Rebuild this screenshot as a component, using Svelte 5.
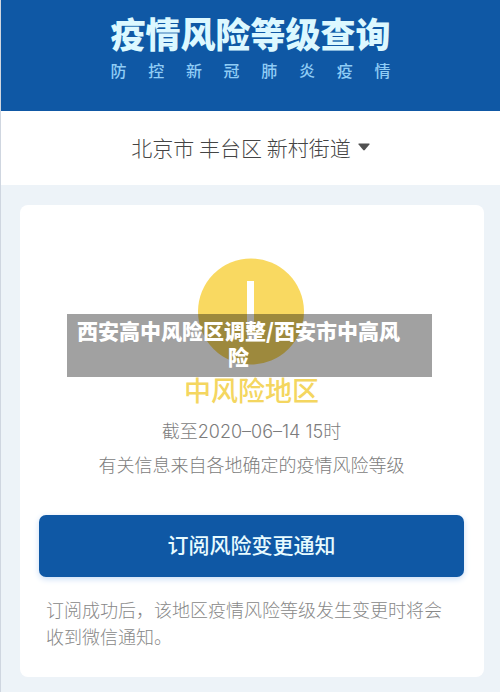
<script>
    let region = ["北京市", "丰台区", "新村街道"];
    let subtitle = "防控新冠肺炎疫情";
    let updated = "2020–06–14 15";
</script>

<style>
:global(body){
    margin: 0;
    background: #edf3f8;
}
.page{
    min-height: 100vh;
    box-sizing: border-box;
    font-family: "Noto Sans CJK SC", sans-serif;
    background: #edf3f8;
    border-left: 1px solid #cfd6e0;
}
.banner{
    display: flex;
    flex-direction: column;
    align-items: center;
    padding: 12px 0 29px;
    background: #0f58a5;
}
.banner-text{
    display: flex;
    flex-direction: column;
}
h1{
    margin: 0;
    font-size: 35px;
    line-height: 42px;
    font-weight: 900;
    color: #dcf8ff;
}
.subtitle{
    display: flex;
    justify-content: space-between;
    margin: 5px 0 0;
    font-size: 16px;
    line-height: 23px;
    font-weight: 500;
    color: #8fccf5;
}
.region{
    display: flex;
    align-items: center;
    justify-content: center;
    gap: 7px;
    width: 100%;
    height: 74px;
    padding: 0 0 2px;
    border: 0;
    background: #fff;
    font-family: inherit;
    font-size: 21px;
    font-weight: 300;
    color: #444;
}
.card{
    position: relative;
    margin: 20px 16px 16px 19px;
    padding: 53px 20px 27px 19px;
    border-radius: 8px;
    background: #fff;
    text-align: center;
}
.status-icon{
    display: block;
    width: 107px;
    height: 107px;
    margin: 0 auto;
}
h2{
    margin: 7px 0 0;
    font-size: 27px;
    line-height: 36px;
    font-weight: 500;
    color: #f4d660;
}
.info{
    margin: 6px 0 0;
    font-size: 18px;
    line-height: 32px;
    font-weight: 300;
    color: #7c7c7c;
}
.info p{
    margin: 0;
}
.latin{
    font-family: Inter, sans-serif;
}
.subscribe{
    display: block;
    width: 100%;
    height: 62px;
    margin: 35px 0 0;
    padding: 0 0 4px;
    border: 0;
    border-radius: 7px;
    background: #0f58a5;
    box-shadow: 0 2px 6px #c8dcf5;
    font-family: inherit;
    font-size: 21px;
    font-weight: 500;
    color: #e8fbff;
}
.note{
    margin: 19px 7px 0;
    font-size: 18px;
    line-height: 27px;
    font-weight: 300;
    text-align: left;
    color: #888;
}
.caption{
    position: absolute;
    top: 109px;
    left: 47px;
    right: 52px;
    padding: 3px 30px 8px 8px;
    background: rgba(0, 0, 0, 0.37);
    font-size: 21px;
    line-height: 26px;
    font-weight: 900;
    color: #fff;
}
</style>

<div class="page">
    <header class="banner">
        <div class="banner-text">
            <h1>疫情风险等级查询</h1>
            <p class="subtitle">
                {#each subtitle as char}
                    <span>{char}</span>
                {/each}
            </p>
        </div>
    </header>
    <button type="button" class="region">
        <span>{region.join(" ")}</span>
        <svg width="12" height="8" viewBox="0 0 12 8" aria-hidden="true">
            <path d="M1 0.5h10q1 0 0.4 0.9L6.8 7q-0.8 0.8-1.6 0L0.6 1.4Q0 0.5 1 0.5z" fill="#505050" />
        </svg>
    </button>
    <main class="card">
        <svg class="status-icon" viewBox="0 0 107 107" aria-hidden="true">
            <circle cx="53" cy="53.5" r="53" fill="#f9d961" />
            <rect x="49" y="23" width="7" height="46" fill="#fff" />
            <rect x="49" y="76" width="7" height="7" fill="#fff" />
        </svg>
        <h2>中风险地区</h2>
        <div class="info">
            <p>截至<span class="latin">{updated}</span>时</p>
            <p>有关信息来自各地确定的疫情风险等级</p>
        </div>
        <button type="button" class="subscribe">订阅风险变更通知</button>
        <p class="note">订阅成功后，该地区疫情风险等级发生变更时将会收到微信通知。</p>
        <div class="caption">西安高中风险区调整/西安市中高风险</div>
    </main>
</div>
